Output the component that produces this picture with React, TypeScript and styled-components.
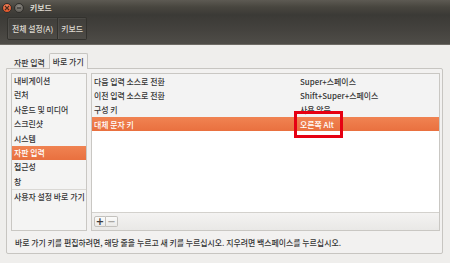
import React from "react";
import styled, { createGlobalStyle } from "styled-components";

const Global = createGlobalStyle`
  html, body { margin: 0; padding: 0; background: #efeeec; overflow: hidden; }
  body { font-family: "Noto Sans CJK KR", "Noto Sans", sans-serif; }
  * { box-sizing: border-box; }
`;

const Window = styled.div`
  width: 450px;
  height: 263px;
  display: flex;
  flex-direction: column;
  background: #efeeec;
  position: relative;
  font-size: 7.9px;
  font-weight: 500;
  color: #333333;
`;

const Header = styled.div`
  height: 45px;
  display: flex;
  flex-direction: column;
  background: linear-gradient(#5d5a53 0px, #48463f 7px, #3b3a36 15px, #43413d 28px, #4e4c47 43px);
  border-bottom: 1px solid #6e6b65;
`;

const TitleBar = styled.div`
  height: 15px;
  display: flex;
  align-items: center;
  padding-left: 2px;
  gap: 2px;
`;

const WinButton = styled.div<{ $kind: "close" | "min" }>`
  width: 10px;
  height: 10px;
  border-radius: 50%;
  display: flex;
  align-items: center;
  justify-content: center;
  background: ${(p) =>
    p.$kind === "close"
      ? "radial-gradient(circle at 50% 35%, #f8906a, #e2562a 70%)"
      : "radial-gradient(circle at 50% 35%, #8d8a84, #65625c 70%)"};
  border: 1px solid #2f2e2b;
`;

const Title = styled.div`
  margin-left: 4px;
  color: #dfdbd2;
  font-weight: bold;
`;

const Toolbar = styled.div`
  display: flex;
  padding: 2px 0 0 7px;
`;

const ToolButton = styled.div<{ $first?: boolean }>`
  height: 23px;
  display: flex;
  align-items: center;
  padding: ${(p) => (p.$first ? "0 4px 0 4px" : "0 3px 0 3px")};
  color: #dfdbd2;
  border: 1px solid #33322e;
  border-left: ${(p) => (p.$first ? "1px solid #33322e" : "none")};
  border-radius: ${(p) => (p.$first ? "2px 0 0 2px" : "0 2px 2px 0")};
  box-shadow: inset 1px 1px 0 rgba(255, 255, 255, 0.06);
  background: rgba(255, 255, 255, 0.02);
`;

const Body = styled.div`
  flex: 1;
  display: flex;
  flex-direction: column;
  padding: 5px 7px 9px 6px;
`;

const TabRow = styled.div`
  height: 18px;
  display: flex;
  align-items: flex-end;
  padding-left: 4px;
`;

const Tab = styled.div<{ $active?: boolean }>`
  height: ${(p) => (p.$active ? "16px" : "15px")};
  display: flex;
  align-items: center;
  padding: 0 3px 0 3px;
  background: ${(p) => (p.$active ? "#f2f1f0" : "transparent")};
  border: ${(p) => (p.$active ? "1px solid #c7c5c1" : "1px solid transparent")};
  border-bottom: none;
  border-radius: 2px 2px 0 0;
  margin-bottom: -1px;
  position: relative;
  z-index: 1;
`;

const Panel = styled.div`
  flex: 1;
  display: flex;
  flex-direction: column;
  background: #f2f1f0;
  border: 1px solid #c7c5c1;
  border-radius: 0 2px 2px 2px;
  padding: 4px 2px 0 4px;
`;

const Split = styled.div`
  display: flex;
  gap: 4px;
  height: 158px;
`;

const SideList = styled.div`
  width: 76px;
  background: #f4f4f3;
  border: 1px solid #c9c7c3;
  display: flex;
  flex-direction: column;
`;

const SideItem = styled.div<{ $sel?: boolean }>`
  height: 14.4px;
  line-height: 14.4px;
  padding-left: 2px;
  white-space: nowrap;
  overflow: hidden;
  color: ${(p) => (p.$sel ? "#ffffff" : "#333333")};
  background: ${(p) => (p.$sel ? "linear-gradient(#f08352, #e9703f)" : "transparent")};
`;

const SideSep = styled.div`
  height: 1px;
  background: #dad8d4;
`;

const TreeFrame = styled.div`
  flex: 1;
  display: flex;
  flex-direction: column;
  border: 1px solid #c9c7c3;
  background: #ffffff;
`;

const Rows = styled.div`
  flex: 1;
  display: flex;
  flex-direction: column;
  background: #ffffff;
`;

const Row = styled.div<{ $sel?: boolean }>`
  height: 14.3px;
  display: flex;
  align-items: center;
  white-space: nowrap;
  color: ${(p) => (p.$sel ? "#ffffff" : "#333333")};
  background: ${(p) => (p.$sel ? "linear-gradient(#f08352, #e9703f)" : "#f3f3f3")};
`;

const Cell1 = styled.div`
  width: 208px;
  padding-left: 2px;
`;

const Cell2 = styled.div`
  flex: 1;
`;

const TreeToolbar = styled.div`
  height: 18px;
  display: flex;
  align-items: center;
  padding-left: 2px;
  background: linear-gradient(#f4f3f2, #e9e8e6);
  border-top: 1px solid #d3d1cd;
`;

const MiniButton = styled.div<{ $first?: boolean; $dim?: boolean }>`
  width: 12px;
  height: 11px;
  display: flex;
  align-items: center;
  justify-content: center;
  border: 1px solid #c3c1bd;
  border-left: ${(p) => (p.$first ? "1px solid #c3c1bd" : "none")};
  border-radius: ${(p) => (p.$first ? "2px 0 0 2px" : "0 2px 2px 0")};
  background: linear-gradient(#fbfbfa, #ebeae8);
  color: ${(p) => (p.$dim ? "#a8a6a2" : "#3c3c3c")};
  font-size: 10px;
  font-weight: bold;
  line-height: 1;
  font-family: "DejaVu Sans", sans-serif;
`;

const Hint = styled.div`
  height: 22px;
  display: flex;
  align-items: center;
  padding-left: 4px;
  white-space: nowrap;
`;

const Annotation = styled.div`
  position: absolute;
  left: 294px;
  top: 111px;
  width: 49px;
  height: 27px;
  border: 3px solid #e60012;
`;

const sideItems = [
  "내비게이션",
  "런처",
  "사운드 및 미디어",
  "스크린샷",
  "시스템",
  "자판 입력",
  "접근성",
  "창",
];

const rows = [
  ["다음 입력 소스로 전환", "Super+스페이스"],
  ["이전 입력 소스로 전환", "Shift+Super+스페이스"],
  ["구성 키", "사용 않음"],
  ["대체 문자 키", "오른쪽 Alt"],
];

export default function App() {
  return (
    <Window>
      <Global />
      <Header>
        <TitleBar>
          <WinButton $kind="close">
            <svg width="6" height="6" viewBox="0 0 6 6">
              <path d="M1 1L5 5M5 1L1 5" stroke="#4a2a1c" strokeWidth="1.2" />
            </svg>
          </WinButton>
          <WinButton $kind="min">
            <svg width="6" height="6" viewBox="0 0 6 6">
              <path d="M1 3H5" stroke="#2e2d2a" strokeWidth="1.2" />
            </svg>
          </WinButton>
          <Title>키보드</Title>
        </TitleBar>
        <Toolbar>
          <ToolButton $first>전체 설정(A)</ToolButton>
          <ToolButton>키보드</ToolButton>
        </Toolbar>
      </Header>
      <Body>
        <TabRow>
          <Tab>자판 입력</Tab>
          <Tab $active>바로 가기</Tab>
        </TabRow>
        <Panel>
          <Split>
            <SideList>
              {sideItems.map((s) => (
                <SideItem key={s} $sel={s === "자판 입력"}>
                  {s}
                </SideItem>
              ))}
              <SideSep />
              <SideItem>사용자 설정 바로 가기</SideItem>
            </SideList>
            <TreeFrame>
              <Rows>
                {rows.map(([a, b], i) => (
                  <Row key={a} $sel={i === 3}>
                    <Cell1>{a}</Cell1>
                    <Cell2>{b}</Cell2>
                  </Row>
                ))}
              </Rows>
              <TreeToolbar>
                <MiniButton $first>+</MiniButton>
                <MiniButton $dim>−</MiniButton>
              </TreeToolbar>
            </TreeFrame>
          </Split>
          <Hint>
            바로 가기 키를 편집하려면, 해당 줄을 누르고 새 키를 누르십시오. 지우려면 백스페이스를 누르십시오.
          </Hint>
        </Panel>
      </Body>
      <Annotation />
    </Window>
  );
}
